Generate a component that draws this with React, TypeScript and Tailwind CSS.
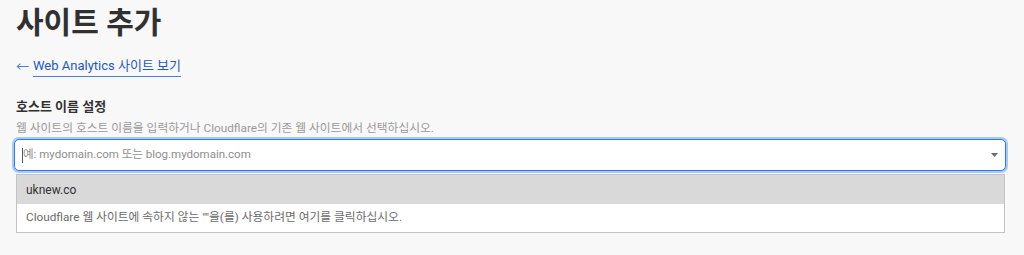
const font = { fontFamily: 'Roboto, "Noto Sans CJK KR", sans-serif' };

export default function App() {
  return (
    <div className="h-[255px] w-[1024px] overflow-hidden bg-[#f8f8f8] px-4" style={font}>
      {/* Title */}
      <h1 className="pt-[4px] text-[30px] font-semibold leading-[38px] text-[#313131]">사이트 추가</h1>

      {/* Back link */}
      <a href="#" className="mt-[15px] inline-flex items-center gap-[4px] text-[13px] leading-[18px] text-[#1d57c4]">
        <span className="text-[#4a7fd6]">←</span>
        <span className="border-b border-[#4a7fd6] pb-[1px]">Web Analytics 사이트 보기</span>
      </a>

      {/* Hostname field */}
      <div className="mt-[20px]">
        <div className="text-[13px] font-semibold leading-[18px] text-[#313131]">호스트 이름 설정</div>
        <div className="mt-[4px] text-[11.75px] leading-[16px] text-[#9a9a9a]">
          웹 사이트의 호스트 이름을 입력하거나 Cloudflare의 기존 웹 사이트에서 선택하십시오.
        </div>

        <div className="relative mt-[3px] -ml-[2px] w-[992px]">
          <div className="flex h-[32px] items-center rounded-[5px] border border-[#2b7cf3] bg-white pl-[7px] pr-[7px] shadow-[0_0_0_2px_#a8c8f7]">
            <span className="h-[15px] w-px bg-[#555]" />
            <span className="flex-1 text-[11.5px] text-[#8e8e8e]">예: mydomain.com 또는 blog.mydomain.com</span>
            <svg width="7" height="4" viewBox="0 0 7 4">
              <path d="M0 0h7L3.5 4z" fill="#6b6b6b" />
            </svg>
          </div>

          {/* Dropdown */}
          <div className="ml-[2px] mt-[3px] w-[989px] border border-[#c3c3c3] bg-white">
            <div className="flex h-[29px] items-center bg-[#d9d9d9] pl-[9px] text-[12px] text-[#333]">uknew.co</div>
            <div className="flex h-[28px] items-center pl-[9px] text-[11.75px] text-[#6b6b6b]">
              Cloudflare 웹 사이트에 속하지 않는 ""을(를) 사용하려면 여기를 클릭하십시오.
            </div>
          </div>
        </div>
      </div>
    </div>
  );
}
